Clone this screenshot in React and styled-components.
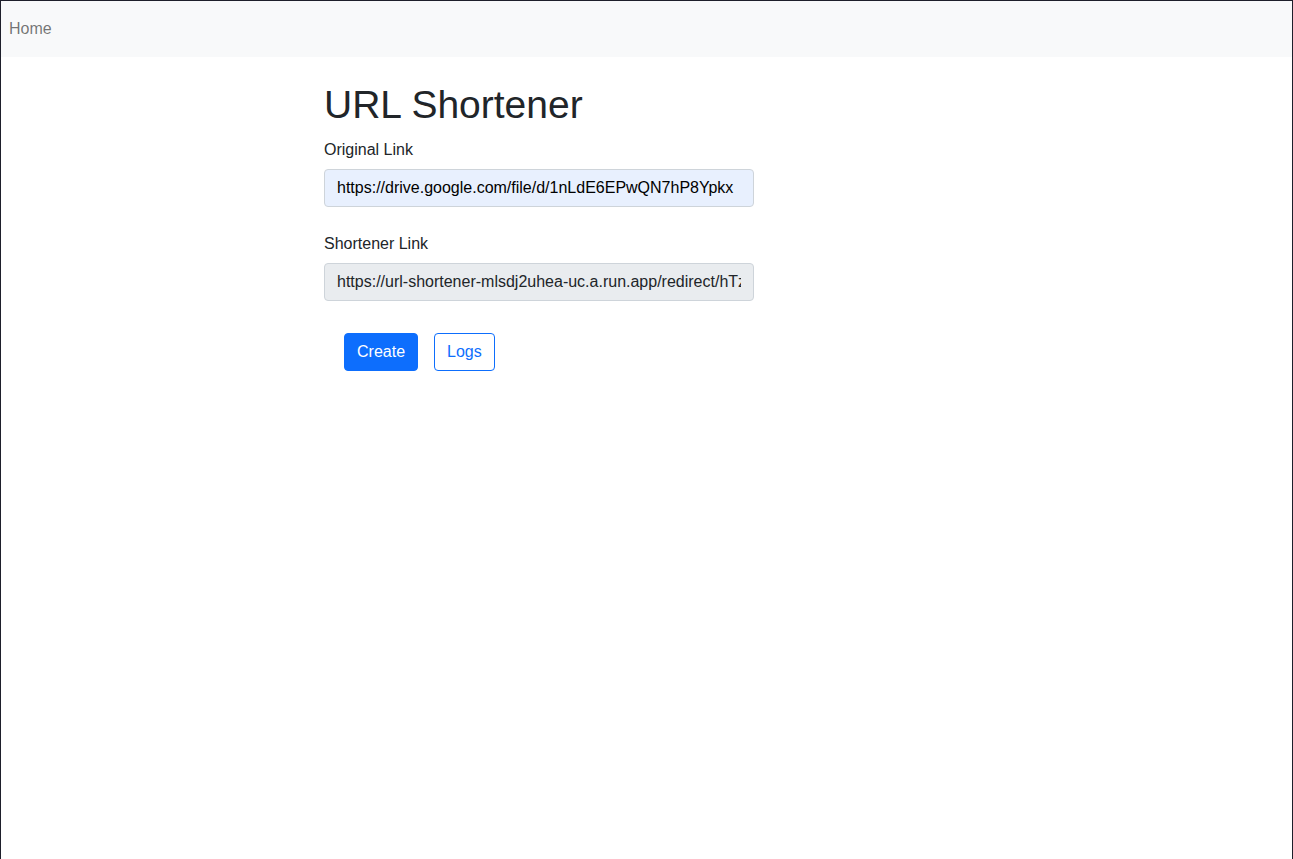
import React from 'react';
import styled, { createGlobalStyle } from 'styled-components';

const GlobalStyle = createGlobalStyle`
    * { box-sizing: border-box; }
    body {
        margin: 0;
        background: #fff;
        font-family: "Liberation Sans", Arial, sans-serif;
        color: #212529;
    }
`;

const Frame = styled.div`
    min-height: 859px;
    border: 1px solid #1e1f2b;
    border-bottom: none;
`;

const Navbar = styled.nav`
    height: 56px;
    background: #f8f9fa;
    display: flex;
    align-items: center;
    padding-left: 8px;
`;

const NavLink = styled.a`
    color: rgba(0, 0, 0, 0.55);
    font-size: 16px;
    text-decoration: none;
`;

const Main = styled.main`
    padding: 24px 0 0 323px;
    width: 753px;
`;

const Title = styled.h1`
    margin: 0 0 8px;
    font-size: 39px;
    font-weight: 400;
    line-height: 48px;
`;

const Field = styled.div`
    margin-bottom: 24px;
`;

const Label = styled.label`
    display: block;
    font-size: 16px;
    line-height: 24px;
    margin-bottom: 8px;
    padding-top: 1px;
`;

const Input = styled.input`
    display: block;
    width: 100%;
    height: 38px;
    margin-top: -1px;
    padding: 6px 12px;
    font: inherit;
    font-size: 16px;
    color: ${p => (p.disabled ? '#212529' : '#000')};
    background: ${p => (p.disabled ? '#e9ecef' : '#e8f0fe')};
    border: 1px solid #ced4da;
    border-radius: 4px;
    opacity: 1;
`;

const Actions = styled.div`
    display: flex;
    gap: 16px;
    padding: 8px 20px;
`;

const Button = styled.button`
    height: 38px;
    padding: 0 12px;
    font: inherit;
    font-size: 16px;
    border-radius: 4px;
    border: 1px solid #0d6efd;
    background: ${p => (p.outline ? '#fff' : '#0d6efd')};
    color: ${p => (p.outline ? '#0d6efd' : '#fff')};
    cursor: pointer;
`;

export default function App() {
    return (
        <>
            <GlobalStyle />
            <Frame>
                <Navbar>
                    <NavLink href="#">Home</NavLink>
                </Navbar>
                <Main>
                    <Title>URL Shortener</Title>
                    <Field>
                        <Label>Original Link</Label>
                        <Input defaultValue="https://drive.google.com/file/d/1nLdE6EPwQN7hP8Ypkx" />
                    </Field>
                    <Field>
                        <Label>Shortener Link</Label>
                        <Input disabled defaultValue="https://url-shortener-mlsdj2uhea-uc.a.run.app/redirect/hTz" />
                    </Field>
                    <Actions>
                        <Button>Create</Button>
                        <Button outline>Logs</Button>
                    </Actions>
                </Main>
            </Frame>
        </>
    );
}
